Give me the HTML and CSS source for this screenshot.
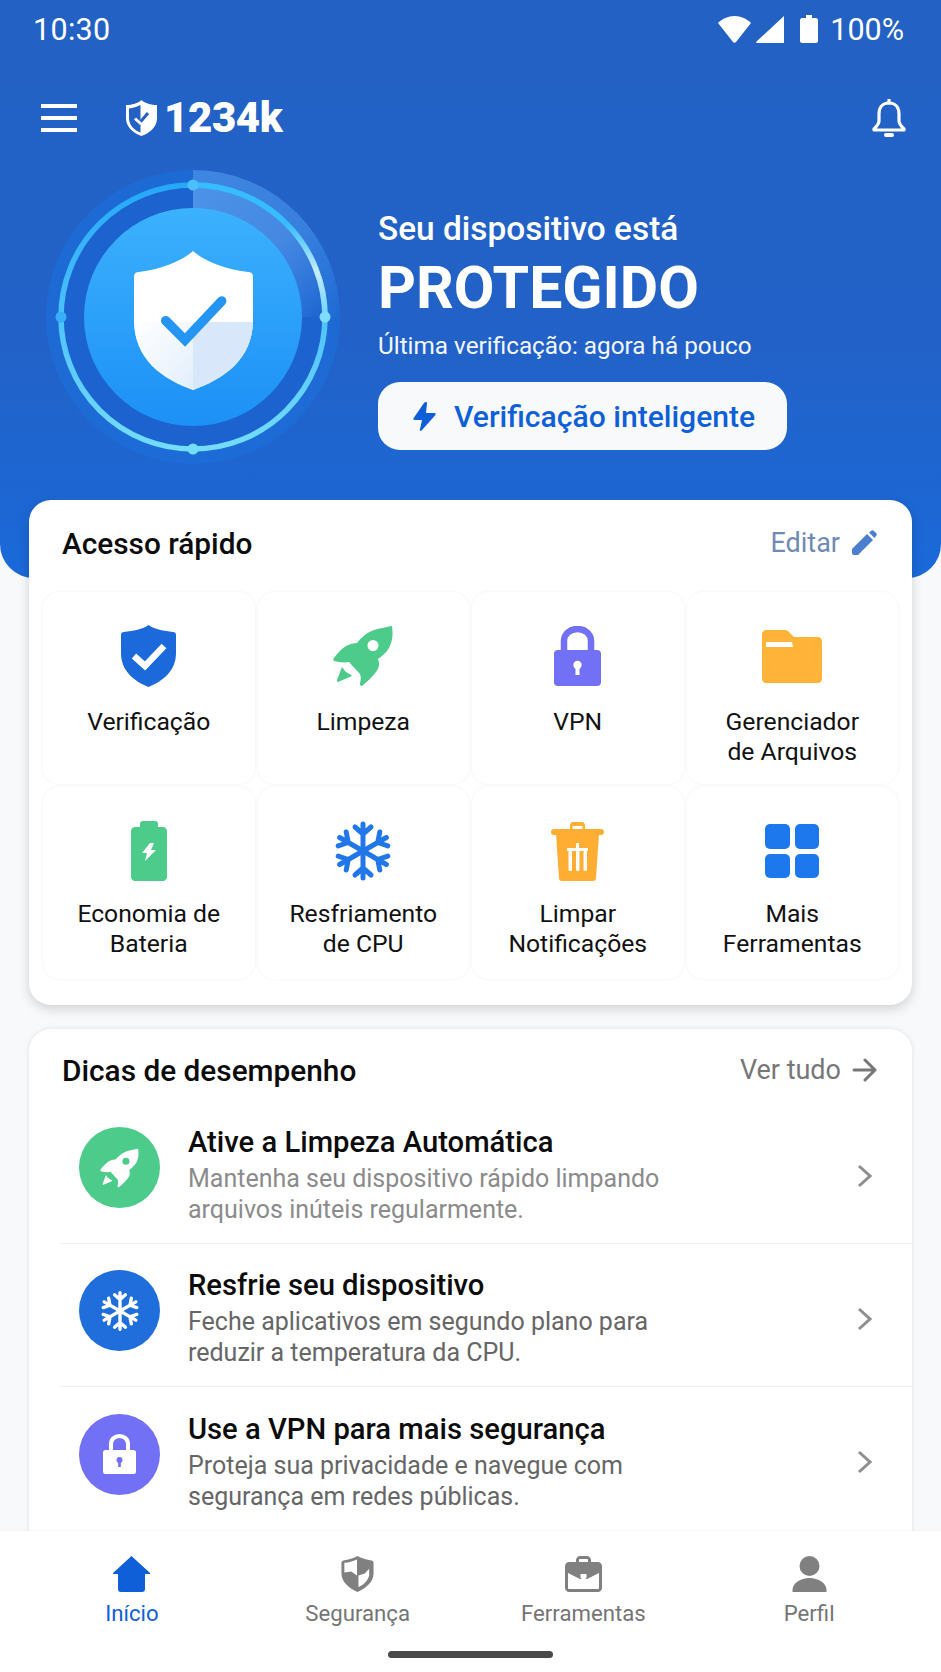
FILE: index.html
```html
<!DOCTYPE html>
<html lang="pt-BR">
<head>
<meta charset="utf-8">
<title>1234k</title>
<link rel="stylesheet" href="styles.css">
</head>
<body>
<svg class="defs" width="0" height="0" aria-hidden="true">
  <defs>
    <symbol id="rocket" viewBox="0 0 60 62">
      <path d="M59 1C60 9 60 15 56 23C53 28 49 31 45 34C47 39 46 43 43 47C39 52 34 57 29 61C27 61 27 60 27 58C28 55 28 52 27 49L16 37C11 38 6 37 1 36C0 35 0 34 1 33C4 29 8 24 13 21C17 19 21 18 24 18C28 13 33 8 41 5C47 3 54 2 59 1Z"/>
      <path d="M9 42L12 46C14 48 16 48 19 51L5 57C4 57 4 56 4 55Z"/>
    </symbol>
    <symbol id="flake" viewBox="0 0 56 62">
      <g fill="none" stroke="currentColor" stroke-width="5" stroke-linecap="round" stroke-linejoin="round">
        <g id="arm"><path d="M28 31V4M20 7L28 14L36 7"/></g>
        <use href="#arm" transform="rotate(60 28 31)"/>
        <use href="#arm" transform="rotate(120 28 31)"/>
        <use href="#arm" transform="rotate(180 28 31)"/>
        <use href="#arm" transform="rotate(240 28 31)"/>
        <use href="#arm" transform="rotate(300 28 31)"/>
      </g>
    </symbol>
  </defs>
</svg>

<div class="screen">
  <main class="content">
    <section class="hero">
      <div class="status">
        <span class="time">10:30</span>
        <div class="status-right">
          <svg class="st-wifi" viewBox="0 0 33 27"><path d="M0 7C4 3 10 0 16.500 0S29 3 33 7L18 26C17 27 16 27 15 26Z" fill="#fff"/></svg>
          <svg class="st-signal" viewBox="0 0 28 27"><path d="M28 0V27H1C0 27 0 26 0.500 25.500Z" fill="#fff"/></svg>
          <svg class="st-batt" viewBox="0 0 18 28"><path d="M6 0H12V3H16C17 3 18 4 18 5V26C18 27 17 28 16 28H2C1 28 0 27 0 26V5C0 4 1 3 2 3H6Z" fill="#fff"/></svg>
          <span class="pct">100%</span>
        </div>
      </div>

      <header class="appbar">
        <div class="burger"><i></i><i></i><i></i></div>
        <div class="brand">
          <svg class="brand-shield" viewBox="0 0 31 36">
            <path d="M15.500 0C19 3.500 25 5 31 5V18C31 27 24 33 15.500 36C7 33 0 27 0 18V5C6 5 12 3.500 15.500 0Z" fill="#fff"/>
            <path d="M14.500 5C11 7 7 8 3 8.400V18C3 25 8 30 14.500 32.500Z" fill="#2361c4"/>
            <path d="M9 18.500L13.500 23L22 13" fill="none" stroke="#2361c4" stroke-width="3"/>
            <path d="M9 18.500L14 23L15 22" fill="none" stroke="#fff" stroke-width="3"/>
          </svg>
          <span class="brand-name">1234k</span>
        </div>
        <svg class="bell" viewBox="0 0 34 39" fill="none" stroke="#fff" stroke-width="3.200" stroke-linejoin="round" stroke-linecap="round">
          <path d="M17 4C10 4 7 9 7 15V22C7 25 5 27 2 30V31H32V30C29 27 27 25 27 22V15C27 9 24 4 17 4Z"/>
          <path d="M17 1V4"/>
          <path d="M14 36H20" stroke-width="4"/>
        </svg>
      </header>

      <div class="hero-row">
        <svg class="gauge" viewBox="0 0 300 300">
          <defs>
            <linearGradient id="discG" x1="0" y1="0" x2="0" y2="1">
              <stop offset="0" stop-color="#3cb1fd"/>
              <stop offset="1" stop-color="#1c90f6"/>
            </linearGradient>
            <linearGradient id="wedgeG" x1="0" y1="0" x2="1" y2="1">
              <stop offset="0" stop-color="#4d93e8"/>
              <stop offset=".55" stop-color="#4488e2"/>
              <stop offset="1" stop-color="#4d93e8" stop-opacity="0"/>
            </linearGradient>
            <linearGradient id="ringG" x1="0" y1="0" x2="0" y2="1">
              <stop offset="0" stop-color="#25a8f8"/>
              <stop offset="1" stop-color="#74dcff"/>
            </linearGradient>
            <linearGradient id="ringHi" x1="0" y1="0" x2="0" y2="1">
              <stop offset="0" stop-color="#36bcff"/>
              <stop offset="0.3" stop-color="#38bcff"/>
              <stop offset="0.65" stop-color="#c5ecff"/>
              <stop offset="1" stop-color="#6cd4ff"/>
            </linearGradient>
            <linearGradient id="shieldLow" x1="0" y1="0" x2="1" y2="1">
              <stop offset="0" stop-color="#fff"/>
              <stop offset="1" stop-color="#cfe3f9"/>
            </linearGradient>
            <clipPath id="shieldClip">
              <path id="shieldPath" d="M150 84C160 93 180 102 205 105C209 105 210 107 210 111V153C210 193 180 212 150 223C120 212 91 193 91 153V111C91 107 92 105 96 105C120 102 140 93 150 84Z"/>
            </clipPath>
          </defs>
          <circle cx="150" cy="150" r="147" fill="#1e6ed8" opacity=".75"/>
          <path d="M150 3A147 147 0 0 1 297 150H150Z" fill="url(#wedgeG)" opacity=".7"/>
          <circle cx="150" cy="150" r="131" fill="#1c63cf"/>
          <path d="M150 18A132 132 0 0 1 282 150H150Z" fill="url(#wedgeG)"/>
          <circle cx="150" cy="150" r="109" fill="url(#discG)"/>
          <circle cx="150" cy="150" r="132" fill="none" stroke="url(#ringG)" stroke-width="5.500"/>
          <path d="M150 18A132 132 0 0 1 282 150" fill="none" stroke="url(#ringHi)" stroke-width="5.500"/>
          <circle cx="150" cy="18" r="5.500" fill="#4cc0ff"/>
          <circle cx="282" cy="150" r="5.500" fill="#7fdcff"/>
          <circle cx="150" cy="282" r="5.500" fill="#74dcff"/>
          <circle cx="18" cy="150" r="5.500" fill="#39aef8"/>
          <g>
            <use href="#shieldPath" fill="#fff"/>
            <g clip-path="url(#shieldClip)">
              <rect x="150" y="155" width="62" height="70" fill="#d8e8fa"/>
              <rect x="88" y="155" width="62" height="70" fill="url(#shieldLow)" opacity=".6"/>
            </g>
            <path d="M122.700 153.700L142 173L178.700 134" fill="none" stroke="#2595f4" stroke-width="9.500" stroke-linecap="round" stroke-linejoin="miter"/>
          </g>
        </svg>

        <div class="hero-text">
          <p class="hero-sub">Seu dispositivo está</p>
          <h1 class="hero-title">PROTEGIDO</h1>
          <p class="hero-last">Última verificação: agora há pouco</p>
          <button class="smart-btn">
            <svg class="bolt" viewBox="0 0 23 29"><path d="M13 0C14 0 14 1 14 1.500L13 11H21C23 11 23 12 22 13.500L9 28C8 29.500 6 29 7 27L9 18H2C0 18 0 17 1 15.500L11 1C12 0 12.500 0 13 0Z" fill="#0f5fd8"/></svg>
            <span>Verificação inteligente</span>
          </button>
        </div>
      </div>
    </section>

    <section class="card quick">
      <div class="card-head quick-head">
        <h2>Acesso rápido</h2>
        <span class="edit">Editar
          <svg class="pencil" viewBox="0 0 26 26"><path d="M1 19L16 4L22 10L7 25H3C2 25 1 24 1 23Z" fill="#4a7fd0"/><path d="M18 2.500L20 1C21 0 22 0 23 1L25 3C26 4 26 5 25 6L23.500 8Z" fill="#4a7fd0"/></svg>
        </span>
      </div>
      <div class="grid">
        <div class="cell">
          <div class="ic"><svg class="i-shield" viewBox="0 0 55 62"><path d="M27.500 0C33 4 43 6 52 7C54 7 55 8 55 10V28C55 46 42 56 27.500 62C13 56 0 46 0 28V10C0 8 1 7 3 7C12 6 22 4 27.500 0Z" fill="#1c69dc"/><path d="M13 31L24 41L43 21" fill="none" stroke="#fff" stroke-width="6.500"/></svg></div>
          <p>Verificação</p>
        </div>
        <div class="cell">
          <div class="ic"><svg class="i-rocket c-green" viewBox="0 0 60 62"><use href="#rocket"/><circle cx="40" cy="20.500" r="5.500" fill="#fff"/></svg></div>
          <p>Limpeza</p>
        </div>
        <div class="cell">
          <div class="ic"><svg class="i-lock" viewBox="0 0 47 60"><path d="M10 26V15C10 8 16 3 23.500 3S37 8 37 15V26" fill="none" stroke="#7270f5" stroke-width="6.500"/><rect y="24" width="47" height="36" rx="4" fill="#7270f5"/><circle cx="23.500" cy="39" r="4.200" fill="#fff"/><rect x="21.500" y="40" width="4" height="9" fill="#fff"/></svg></div>
          <p>VPN</p>
        </div>
        <div class="cell">
          <div class="ic"><svg class="i-folder" viewBox="0 0 60 53"><path d="M4 0H23C25 0 26 1 27 2L32 7H56C58 7 60 9 60 11V49C60 51 58 53 56 53H4C2 53 0 51 0 49V4C0 2 2 0 4 0Z" fill="#ffb338"/><path d="M4 13C4 12 5 12 6 12H30L31 17H4Z" fill="#fff"/></svg></div>
          <p>Gerenciador<br>de Arquivos</p>
        </div>
        <div class="cell">
          <div class="ic"><svg class="i-batt" viewBox="0 0 36 60"><path d="M12 0H24C26 0 27 1 27 3V6H32C34 6 36 8 36 10V56C36 58 34 60 32 60H4C2 60 0 58 0 56V10C0 8 2 6 4 6H9V3C9 1 10 0 12 0Z" fill="#4ccb8a"/><path d="M19 22L11 32H16L14 40L25 29H20L23 22Z" fill="#fff"/></svg></div>
          <p>Economia de<br>Bateria</p>
        </div>
        <div class="cell">
          <div class="ic"><svg class="i-flake c-blue"><use href="#flake"/></svg></div>
          <p>Resfriamento<br>de CPU</p>
        </div>
        <div class="cell">
          <div class="ic"><svg class="i-trash" viewBox="0 0 53 59"><path d="M19 7V4C19 2 20 0 22 0H31C33 0 34 2 34 4V7H50C52 7 53 8 53 10S52 13 50 13H3C1 13 0 12 0 10S1 7 3 7Z" fill="#ffad33"/><rect x="21.500" y="4" width="10" height="3" fill="#fff"/><path d="M5 12H48L45 56C45 58 44 59 42 59H11C9 59 8 58 8 56Z" fill="#ffad33"/><path d="M25 21H28V26H37V29H16V26H25Z" fill="#fff"/><rect x="17.500" y="29" width="3.500" height="20" rx="1" fill="#fff"/><rect x="25" y="29" width="3.500" height="20" rx="1" fill="#fff"/><rect x="32.500" y="29" width="3.500" height="20" rx="1" fill="#fff"/></svg></div>
          <p>Limpar<br>Notificações</p>
        </div>
        <div class="cell">
          <div class="ic"><div class="i-grid"><i></i><i></i><i></i><i></i></div></div>
          <p>Mais<br>Ferramentas</p>
        </div>
      </div>
    </section>

    <section class="card tips">
      <div class="card-head tips-head">
        <h2>Dicas de desempenho</h2>
        <span class="more">Ver tudo
          <svg class="arrow" viewBox="0 0 25 24" fill="none" stroke="#777" stroke-width="3" stroke-linecap="round" stroke-linejoin="round"><path d="M2 12H23M13 2L23 12L13 22"/></svg>
        </span>
      </div>
      <article class="tip">
        <div class="tip-ic bg-green"><svg class="t-rocket" viewBox="0 0 60 62"><use href="#rocket" fill="#fff"/><circle cx="40" cy="20.500" r="5.500" fill="#4ccb8a"/></svg></div>
        <div class="tip-body">
          <h3>Ative a Limpeza Automática</h3>
          <p class="faint">Mantenha seu dispositivo rápido limpando<br>arquivos inúteis regularmente.</p>
        </div>
        <svg class="chev" viewBox="0 0 15 24" fill="none" stroke="#8f8f8f" stroke-width="3"><path d="M2 2L13 12L2 22"/></svg>
      </article>
      <article class="tip">
        <div class="tip-ic bg-blue"><svg class="t-flake"><use href="#flake"/></svg></div>
        <div class="tip-body">
          <h3>Resfrie seu dispositivo</h3>
          <p>Feche aplicativos em segundo plano para<br>reduzir a temperatura da CPU.</p>
        </div>
        <svg class="chev" viewBox="0 0 15 24" fill="none" stroke="#8f8f8f" stroke-width="3"><path d="M2 2L13 12L2 22"/></svg>
      </article>
      <article class="tip">
        <div class="tip-ic bg-purple"><svg class="t-lock" viewBox="0 0 33 40"><path d="M8 18V10C8 5 12 2 16.500 2S25 5 25 10V18" fill="none" stroke="#fff" stroke-width="4"/><rect y="16" width="33" height="24" rx="2.500" fill="#fff"/><circle cx="16.500" cy="26" r="3" fill="#7270f5"/><rect x="15.200" y="27" width="2.600" height="6" fill="#7270f5"/></svg></div>
        <div class="tip-body">
          <h3>Use a VPN para mais segurança</h3>
          <p>Proteja sua privacidade e navegue com<br>segurança em redes públicas.</p>
        </div>
        <svg class="chev" viewBox="0 0 15 24" fill="none" stroke="#8f8f8f" stroke-width="3"><path d="M2 2L13 12L2 22"/></svg>
      </article>
    </section>
  </main>

  <nav class="nav">
    <div class="nav-items">
      <a class="nav-item active">
        <svg class="n-ic" viewBox="0 0 37 36"><path d="M18.500 0L37 17V18H32V33C32 35 31 36 29 36H8C6 36 5 35 5 33V18H0V17Z" fill="#0f5fd8"/></svg>
        <span>Início</span>
      </a>
      <a class="nav-item">
        <svg class="n-ic" viewBox="0 0 33 37"><path d="M16.500 0C20 2 26 4 31 4.500C32 4.500 33 5.500 33 7V18C33 27 25 33 16.500 37C8 33 0 27 0 18V7C0 5.500 1 4.500 2 4.500C7 4 13 2 16.500 0Z" fill="#808080"/><path d="M16 3.500C12.500 5 8 6.500 3 7V17L10 16L16 20Z" fill="#fff"/><path d="M17.500 20L24 18L28.500 13V20C27 26 22 30 17.500 32Z" fill="#fff"/></svg>
        <span>Segurança</span>
      </a>
      <a class="nav-item">
        <svg class="n-ic" viewBox="0 0 37 36"><path d="M11 6V4C11 2 13 0 15 0H22C24 0 26 2 26 4V6H33C35 6 37 8 37 10V32C37 34 35 36 33 36H4C2 36 0 34 0 32V10C0 8 2 6 4 6ZM14 6H23V4C23 3.500 22.500 3 22 3H15C14.500 3 14 3.500 14 4Z" fill="#808080" fill-rule="evenodd"/><path d="M3 17L15 23H22L34 17V32C34 33 33 33 32 33H5C4 33 3 33 3 32Z" fill="#fff"/><path d="M15.500 18H21.500V22L18.500 24L15.500 22Z" fill="#fff"/></svg>
        <span>Ferramentas</span>
      </a>
      <a class="nav-item">
        <svg class="n-ic" viewBox="0 0 34 36"><circle cx="17" cy="10" r="10" fill="#808080"/><path d="M0 36V34C0 27 8 22 17 22S34 27 34 34V36Z" fill="#808080"/></svg>
        <span>Perfil</span>
      </a>
    </div>
    <div class="home-bar"></div>
  </nav>
</div>
</body>
</html>
```
FILE: styles.css
```css
* { box-sizing: border-box; }
html, body { margin: 0; padding: 0; }
body {
  width: 941px;
  height: 1672px;
  overflow: hidden;
  background: #f8f9fa;
  font-family: Roboto, "Liberation Sans", sans-serif;
  color: #111;
}
.defs { position: absolute; }
h1, h2, h3, p { margin: 0; }
.screen { height: 1672px; display: flex; flex-direction: column; }
.content { flex: 1; min-height: 0; overflow: hidden; }

/* hero */
.hero {
  height: 578px;
  background: linear-gradient(180deg, #2361c4 0%, #2262c8 60%, #1a69d9 100%);
  border-radius: 0 0 34px 34px;
  color: #fff;
}
.status {
  height: 58px;
  padding: 0 37px 0 33px;
  display: flex;
  align-items: center;
  justify-content: space-between;
}
.time { font-size: 30.500px; letter-spacing: .3px; }
.status-right { display: flex; align-items: center; }
.st-wifi { width: 33px; height: 27px; margin-right: 5px; }
.st-signal { width: 28px; height: 27px; margin-right: 16px; }
.st-batt { width: 18px; height: 28px; margin-right: 12px; }
.pct { font-size: 30.500px; }

.appbar {
  height: 56px;
  margin-top: 32px;
  padding: 0 35px 0 41px;
  display: flex;
  align-items: center;
}
.burger { width: 36px; display: flex; flex-direction: column; gap: 8px; }
.burger i { display: block; height: 4px; background: #fff; }
.brand { margin-left: 49px; display: flex; align-items: center; gap: 7px; }
.brand-shield { width: 31px; height: 36px; }
.brand-name { font-size: 42px; font-weight: 900; letter-spacing: -.4px; line-height: 1; }
.bell { width: 34px; height: 39px; margin-left: auto; }

.hero-row {
  margin-top: 24px;
  padding-left: 43px;
  display: flex;
  align-items: flex-start;
}
.gauge { width: 300px; height: 300px; margin-top: -3px; flex: none; }
.hero-text { margin-left: 35px; padding-top: 38px; }
.hero-sub { font-size: 33.400px; font-weight: 500; line-height: 42px; }
.hero-title { font-size: 59px; font-weight: 700; line-height: 68px; margin-top: 4px; }
.hero-last { font-size: 24.300px; line-height: 32px; margin-top: 8px; opacity: .95; }
.smart-btn {
  margin-top: 20px;
  width: 409px;
  height: 68px;
  border: 0;
  border-radius: 22px;
  background: #f8f9fb;
  display: flex;
  align-items: center;
  padding: 0 0 0 35px;
  gap: 18px;
  font-family: inherit;
  font-size: 30.100px;
  font-weight: 500;
  color: #0f5fd8;
}
.bolt { width: 23px; height: 29px; }

/* cards */
.card {
  width: 883px;
  margin-left: 29px;
  background: #fff;
  border-radius: 22px;
}
.quick {
  height: 505px;
  margin-top: -78px;
  position: relative;
  box-shadow: 0 4px 12px rgba(0, 0, 0, .16);
}
.tips {
  margin-top: 24px;
  min-height: 640px;
  border-radius: 22px 22px 0 0;
  box-shadow: 0 0 5px rgba(0, 0, 0, .1);
}
.card-head {
  display: flex;
  align-items: center;
  justify-content: space-between;
  padding: 0 35px 0 33px;
}
.card-head h2 { font-size: 29.800px; font-weight: 500; color: #0c0c0c; }
.quick-head { height: 92px; padding-bottom: 6px; }
.tips-head { height: 72px; padding-top: 10px; }
.edit, .more { display: flex; align-items: center; gap: 11px; font-size: 27px; }
.edit { color: #6f8ab5; }
.more { color: #777; }
.pencil { width: 26px; height: 26px; }
.arrow { width: 25px; height: 24px; }

.grid {
  display: grid;
  grid-template-columns: repeat(4, 211.500px);
  grid-auto-rows: 191.500px;
  column-gap: 3px;
  row-gap: 3.500px;
  padding: 0 14px;
}
.cell {
  border-radius: 16px;
  background: #fff;
  box-shadow: 0 0 3px rgba(0, 0, 0, .07);
  text-align: center;
  padding-top: 31px;
}
.cell p { font-size: 24.700px; line-height: 30px; color: #111; margin-top: 15px; }
.cell:nth-child(-n+4) p { margin-top: 18px; }
.ic { height: 66px; display: flex; align-items: center; justify-content: center; }
.i-shield { width: 55px; height: 62px; }
.i-rocket { width: 60px; height: 62px; }
.i-lock { width: 47px; height: 60px; }
.i-folder { width: 60px; height: 53px; }
.i-batt { width: 36px; height: 60px; }
.i-flake { width: 56px; height: 62px; }
.i-trash { width: 53px; height: 59px; }
.i-grid {
  width: 54px;
  height: 54px;
  display: grid;
  grid-template-columns: 1fr 1fr;
  gap: 5px;
}
.i-grid i { background: #1d78ee; border-radius: 5px; }
.c-green { fill: #4ccb8a; }
.c-blue { color: #2176e8; }

/* tips */
.tip {
  height: 143px;
  margin-left: 31px;
  padding: 7px 40px 0 19px;
  display: flex;
  align-items: center;
  border-bottom: 1.500px solid #f0f0f1;
}
.tip:last-child { border-bottom: 0; }
.tip-ic {
  width: 81px;
  height: 81px;
  border-radius: 50%;
  display: flex;
  align-items: center;
  justify-content: center;
  flex: none;
  margin: -16px 28px 0 0;
}
.bg-green { background: #4ccb8a; }
.bg-blue { background: #1f6edc; color: #fff; }
.bg-purple { background: #7270f5; }
.t-rocket { width: 39px; height: 40px; }
.t-flake { width: 38px; height: 42px; }
.t-lock { width: 33px; height: 40px; }
.tip-body { flex: 1; margin-top: -2px; }
.tip-body h3 { font-size: 29.200px; font-weight: 500; line-height: 36px; color: #0c0c0c; }
.tip-body p { font-size: 25px; line-height: 31px; color: #666; margin-top: 3px; }
.tip-body p.faint { color: #8b8b8b; }
.chev { width: 15px; height: 24px; flex: none; }

/* nav */
.nav {
  height: 141px;
  flex: none;
  background: #fff;
  position: relative;
  box-shadow: 0 -1px 2px rgba(0, 0, 0, .03);
}
.nav-items {
  display: grid;
  grid-template-columns: repeat(4, 1fr);
  padding: 25px 19px 0;
}
.nav-item {
  display: flex;
  flex-direction: column;
  align-items: center;
  color: #757575;
  font-size: 22.200px;
}
.nav-item span { line-height: 28px; margin-top: 7px; }
.nav-item.active { color: #0f5fd8; }
.n-ic { height: 36px; width: 37px; }
.home-bar {
  width: 165px;
  height: 7px;
  border-radius: 4px;
  background: #4a4a4a;
  margin: 24px auto 0;
}
```
